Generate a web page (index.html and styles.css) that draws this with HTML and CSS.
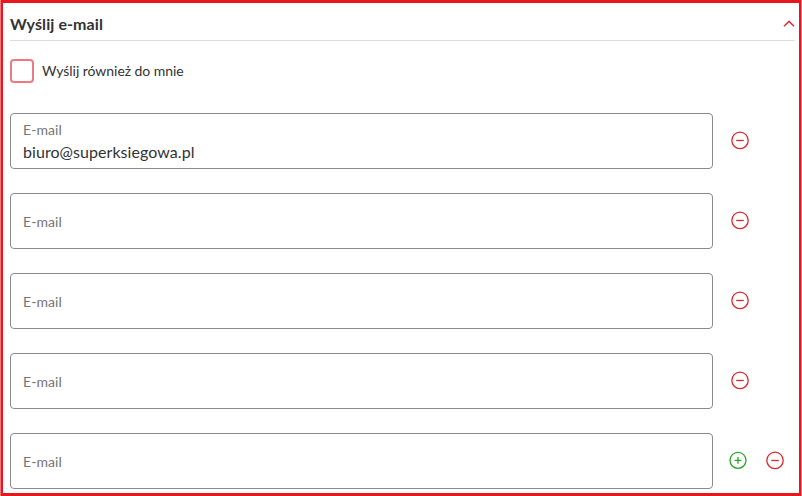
FILE: index.html
```html
<!DOCTYPE html>
<html lang="pl">
<head>
  <meta charset="UTF-8">
  <meta name="viewport" content="width=device-width, initial-scale=1">
  <title>Wyślij e-mail</title>
  <link rel="stylesheet" href="styles.css">
</head>
<body>

<svg class="sprite" width="0" height="0">
  <symbol id="icon-minus" viewBox="0 0 20 20">
    <circle cx="10" cy="10.4" r="8.2"/>
    <path d="M6.2 10.5h7.6"/>
  </symbol>
  <symbol id="icon-plus" viewBox="0 0 20 20">
    <circle cx="10" cy="10.3" r="8"/>
    <path d="M6.6 10.4h6.8M10 7v6.8"/>
  </symbol>
</svg>

<form class="panel">
  <div class="panel-header">
    <h3>Wyślij e-mail</h3>
    <svg class="chevron" width="12" height="8" viewBox="0 0 12 8"><path d="M1 6.2 6 1.4l5 4.8"/></svg>
  </div>

  <label class="checkbox">
    <input type="checkbox">
    <span>Wyślij również do mnie</span>
  </label>

  <div class="row">
    <label class="field">
      <span>E-mail</span>
      <input type="text" value="biuro@superksiegowa.pl">
    </label>
    <button type="button" class="remove"><svg><use href="#icon-minus"/></svg></button>
  </div>

  <div class="row">
    <label class="field"><span>E-mail</span></label>
    <button type="button" class="remove"><svg><use href="#icon-minus"/></svg></button>
  </div>

  <div class="row">
    <label class="field"><span>E-mail</span></label>
    <button type="button" class="remove"><svg><use href="#icon-minus"/></svg></button>
  </div>

  <div class="row">
    <label class="field"><span>E-mail</span></label>
    <button type="button" class="remove"><svg><use href="#icon-minus"/></svg></button>
  </div>

  <div class="row">
    <label class="field"><span>E-mail</span></label>
    <button type="button" class="add"><svg><use href="#icon-plus"/></svg></button>
    <button type="button" class="remove"><svg><use href="#icon-minus"/></svg></button>
  </div>
</form>

</body>
</html>
```
FILE: styles.css
```css
*, *::before, *::after {
  box-sizing: border-box;
}

body {
  margin: 0;
  padding: 0 1px;
  font-family: Lato, sans-serif;
  font-size: 14px;
  color: #333;
  background: #f07a7d;
}

.sprite {
  display: none;
}

.panel {
  height: 496px;
  padding: 9px 4px 0 7px;
  border: 3px solid #e8171c;
  border-width: 3px 2px;
  background: #fff;
  overflow: hidden;
}

.panel-header {
  display: flex;
  align-items: center;
  justify-content: space-between;
  height: 29px;
  padding-bottom: 4px;
  border-bottom: 1px solid #ddd;
}

.panel-header h3 {
  margin: 0;
  font-size: 16px;
  line-height: 24px;
  letter-spacing: 0.08px;
}

.chevron {
  fill: none;
  stroke: #dc3036;
  stroke-width: 1.5;
}

.checkbox {
  display: flex;
  align-items: center;
  gap: 8px;
  height: 24px;
  margin: 18px 0 30px;
  letter-spacing: -0.04px;
}

.checkbox input {
  appearance: none;
  width: 24px;
  height: 24px;
  margin: 0;
  border: 2px solid #ed7a80;
  border-radius: 4px;
}

.checkbox span {
  padding-bottom: 2px;
}

.row {
  display: flex;
  align-items: center;
  margin-bottom: 24px;
}

.field {
  display: flex;
  flex-direction: column;
  justify-content: center;
  width: 703px;
  height: 56px;
  padding: 2px 12px 0;
  border: 1px solid #8a8a8a;
  border-radius: 4px;
  color: #757575;
  line-height: 20px;
  letter-spacing: 0.08px;
}

.field input {
  width: 100%;
  height: 24px;
  padding: 0 0 2px;
  border: none;
  outline: none;
  font: 16px Lato, sans-serif;
  letter-spacing: 0.06px;
  color: #333;
}

.row button {
  width: 20px;
  height: 20px;
  margin: 0 0 2px 17px;
  padding: 0;
  border: none;
  background: none;
}

.row svg {
  display: block;
  width: 20px;
  height: 20px;
  fill: none;
  stroke: currentColor;
  stroke-width: 1.3;
}

.row .remove {
  color: #e0262c;
}

.row .add {
  margin-left: 15px;
  color: #2aa52a;
}

.row .add + .remove {
  margin-left: 17px;
}
```
